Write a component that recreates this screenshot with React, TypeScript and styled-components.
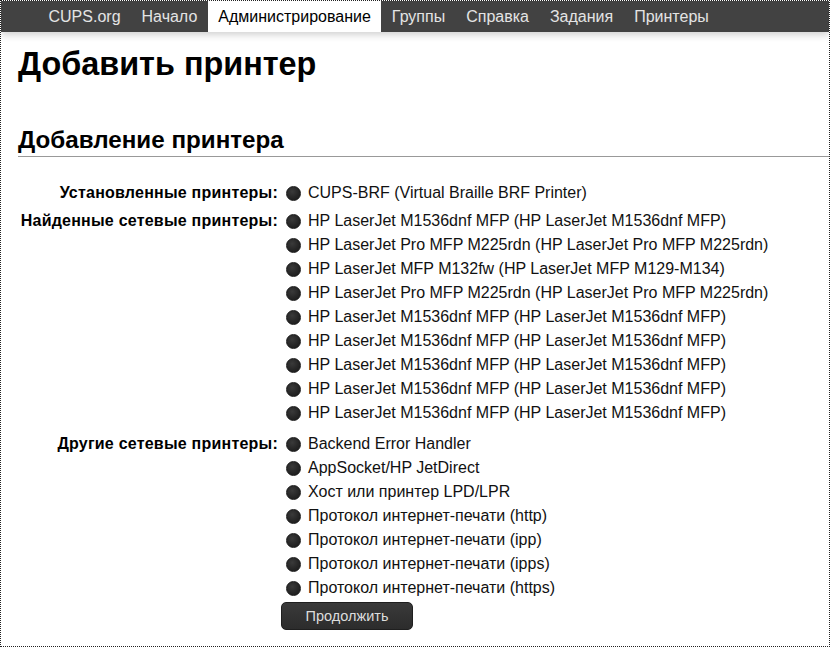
import { Fragment } from "react";
import styled, { createGlobalStyle } from "styled-components";

const GlobalStyle = createGlobalStyle`
  html, body {
    margin: 0;
    padding: 0;
    background: #fff;
  }
  body {
    font-family: "Liberation Sans", Arial, sans-serif;
    color: #111;
  }
`;

const Frame = styled.div`
  width: 830px;
  height: 647px;
  box-sizing: border-box;
  border: 1px dotted #222;
  overflow: hidden;
`;

const Nav = styled.nav`
  display: flex;
  height: 31px;
  padding-left: 37px;
  background: #424242;
  box-shadow: 0 3px 7px rgba(0, 0, 0, 0.18);
`;

const NavItem = styled.a<{ $active?: boolean }>`
  display: flex;
  align-items: center;
  padding: 0 10.5px;
  font-size: 16px;
  text-decoration: none;
  color: ${({ $active }) => ($active ? "#000" : "#e4e4e4")};
  background: ${({ $active }) => ($active ? "#fff" : "transparent")};
`;

const Main = styled.main`
  padding-left: 17px;
`;

const Title = styled.h1`
  margin: 12px 0 0;
  font-size: 32.4px;
  line-height: 40px;
  font-weight: bold;
  color: #000;
`;

const SectionTitle = styled.h2`
  margin: 41px 0 0;
  padding-bottom: 1px;
  font-size: 24.2px;
  line-height: 30px;
  font-weight: bold;
  color: #000;
  border-bottom: 1px solid #999;
`;

const Form = styled.form`
  display: grid;
  grid-template-columns: 260px auto;
  column-gap: 3px;
  margin-top: 24px;
`;

const Label = styled.div<{ $gap: number }>`
  margin-top: ${({ $gap }) => $gap}px;
  text-align: right;
  font-weight: bold;
  font-size: 16px;
  letter-spacing: 0.22px;
  line-height: 24px;
  color: #000;
`;

const Options = styled.div<{ $gap: number }>`
  margin-top: ${({ $gap }) => $gap}px;
  display: flex;
  flex-direction: column;
`;

const Option = styled.label`
  display: flex;
  align-items: center;
  height: 24px;
  font-size: 16px;
  color: #111;
`;

const Radio = styled.input`
  appearance: none;
  flex: none;
  width: 15px;
  height: 15px;
  margin: 0 7px 0 5px;
  border-radius: 50%;
  background: radial-gradient(circle at 40% 35%, #3a3a3a 0%, #242424 60%, #1a1a1a 100%);
  border: 1px solid #1a1a1a;
  box-sizing: border-box;
`;

const Button = styled.button`
  grid-column: 2;
  margin-top: 2px;
  width: 132px;
  height: 28px;
  border: 1px solid #1f1f1f;
  border-radius: 5px;
  background: linear-gradient(#3a3a3a, #2c2c2c);
  color: #ddd;
  font-family: "Liberation Sans", Arial, sans-serif;
  font-size: 14.5px;
`;

const navItems = [
  "CUPS.org",
  "Начало",
  "Администрирование",
  "Группы",
  "Справка",
  "Задания",
  "Принтеры",
];

const groups = [
  {
    label: "Установленные принтеры:",
    gap: 0,
    items: ["CUPS-BRF (Virtual Braille BRF Printer)"],
  },
  {
    label: "Найденные сетевые принтеры:",
    gap: 4,
    items: [
      "HP LaserJet M1536dnf MFP (HP LaserJet M1536dnf MFP)",
      "HP LaserJet Pro MFP M225rdn (HP LaserJet Pro MFP M225rdn)",
      "HP LaserJet MFP M132fw (HP LaserJet MFP M129-M134)",
      "HP LaserJet Pro MFP M225rdn (HP LaserJet Pro MFP M225rdn)",
      "HP LaserJet M1536dnf MFP (HP LaserJet M1536dnf MFP)",
      "HP LaserJet M1536dnf MFP (HP LaserJet M1536dnf MFP)",
      "HP LaserJet M1536dnf MFP (HP LaserJet M1536dnf MFP)",
      "HP LaserJet M1536dnf MFP (HP LaserJet M1536dnf MFP)",
      "HP LaserJet M1536dnf MFP (HP LaserJet M1536dnf MFP)",
    ],
  },
  {
    label: "Другие сетевые принтеры:",
    gap: 7,
    items: [
      "Backend Error Handler",
      "AppSocket/HP JetDirect",
      "Хост или принтер LPD/LPR",
      "Протокол интернет-печати (http)",
      "Протокол интернет-печати (ipp)",
      "Протокол интернет-печати (ipps)",
      "Протокол интернет-печати (https)",
    ],
  },
];

export default function App() {
  return (
    <Frame>
      <GlobalStyle />
      <Nav>
        {navItems.map((item) => (
          <NavItem key={item} $active={item === "Администрирование"}>
            {item}
          </NavItem>
        ))}
      </Nav>
      <Main>
        <Title>Добавить принтер</Title>
        <SectionTitle>Добавление принтера</SectionTitle>
        <Form onSubmit={(e) => e.preventDefault()}>
          {groups.map((group) => (
            <Fragment key={group.label}>
              <Label $gap={group.gap}>{group.label}</Label>
              <Options $gap={group.gap}>
                {group.items.map((item, i) => (
                  <Option key={i}>
                    <Radio type="radio" name="device" />
                    {item}
                  </Option>
                ))}
              </Options>
            </Fragment>
          ))}
          <Button type="submit">Продолжить</Button>
        </Form>
      </Main>
    </Frame>
  );
}
